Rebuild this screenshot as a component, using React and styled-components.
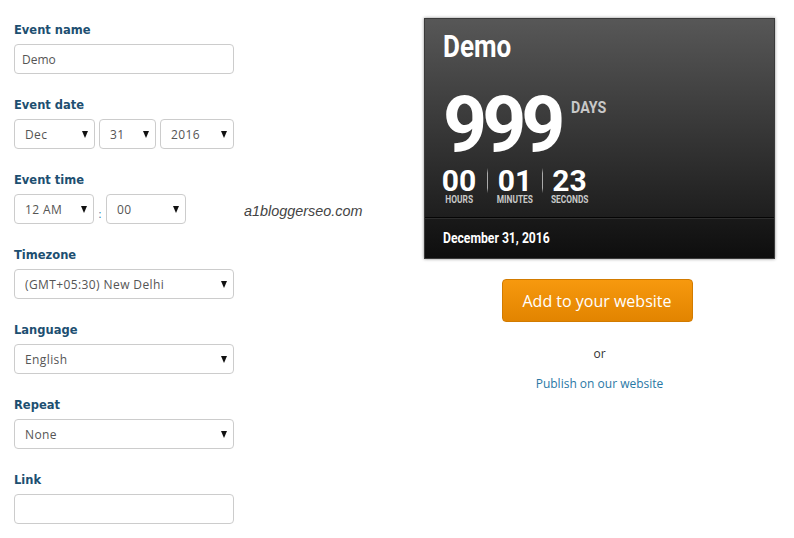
import React from "react";
import styled, { createGlobalStyle } from "styled-components";

const Global = createGlobalStyle`
  html, body { margin: 0; padding: 0; background: #fff; }
  body { font-family: "Open Sans", "Liberation Sans", sans-serif; }
  * { box-sizing: border-box; }
`;

const Page = styled.div`
  position: relative;
  display: flex;
  align-items: flex-start;
  padding: 18px 0 0 14px;
  width: 794px;
  height: 538px;
`;

const Form = styled.div`
  width: 220px;
  padding-top: 4px;
  display: flex;
  flex-direction: column;
`;

const Group = styled.div`
  margin-bottom: 23px;
`;

const Label = styled.label`
  display: block;
  font-family: "DejaVu Sans", Verdana, sans-serif;
  font-weight: bold;
  font-size: 11.5px;
  line-height: 16px;
  color: #1d4f71;
  margin-bottom: 6px;
`;

const TextInput = styled.input`
  display: block;
  width: 100%;
  height: 30px;
  border: 1px solid #ccc;
  border-radius: 4px;
  padding: 0 7px;
  font-family: "Open Sans", sans-serif;
  font-size: 12px;
  color: #555;
  outline: none;
`;

const Row = styled.div`
  display: flex;
  align-items: center;
  gap: ${(p) => p.$gap}px;
`;

const SelectWrap = styled.div`
  position: relative;
  width: ${(p) => (p.$w ? `${p.$w}px` : "100%")};
  height: 30px;
  flex: none;
`;

const Select = styled.select`
  appearance: none;
  -webkit-appearance: none;
  width: 100%;
  height: 30px;
  border: 1px solid #ccc;
  border-radius: 4px;
  background: #fff;
  padding: 0 18px 0 10px;
  font-family: "Open Sans", sans-serif;
  font-size: 12px;
  letter-spacing: 0.4px;
  color: #555;
  outline: none;
`;

const Arrow = styled.span`
  position: absolute;
  right: 7px;
  top: 12px;
  width: 0;
  height: 0;
  border-left: 3.5px solid transparent;
  border-right: 3.5px solid transparent;
  border-top: 7px solid #111;
  pointer-events: none;
`;

const Colon = styled.span`
  width: 12px;
  text-align: center;
  font-size: 11px;
  color: #2a7aa8;
  padding-top: 9px;
`;

const Watermark = styled.div`
  position: absolute;
  left: 244px;
  top: 203px;
  font-family: "Liberation Sans", Arial, sans-serif;
  font-style: italic;
  font-size: 14.4px;
  color: #444;
`;

const Side = styled.div`
  margin-left: 190px;
  width: 351px;
  display: flex;
  flex-direction: column;
  align-items: center;
`;

const Card = styled.div`
  width: 351px;
  font-family: "Roboto", "Liberation Sans", sans-serif;
  font-weight: bold;
  color: #fff;
  box-shadow: 0 0 3px rgba(0, 0, 0, 0.45);
  border: 1px solid #3a3a3a;
`;

const CardTop = styled.div`
  height: 199px;
  padding: 12px 0 0 18px;
  background: linear-gradient(#575757, #1e1e1e);
  border-bottom: 1px solid #050505;
`;

/* condensed face substitute: narrows the glyphs horizontally */
const Squeeze = styled.span`
  display: inline-block;
  white-space: nowrap;
  transform: scaleX(${(p) => p.$s});
  transform-origin: ${(p) => p.$o || "left"} center;
`;

const Title = styled.div`
  font-size: 31px;
  line-height: 31px;
`;

const DaysRow = styled.div`
  display: flex;
  align-items: flex-start;
  margin-top: 25px;
  height: 77px;
`;

const Big = styled.div`
  font-size: 77px;
  line-height: 77px;
  letter-spacing: -5px;
`;

const DaysLabel = styled.div`
  font-size: 17px;
  line-height: 17px;
  color: #c8c8c8;
  margin: 12px 0 0 10px;
`;

const Units = styled.div`
  display: flex;
  margin-top: 2.5px;
`;

const Unit = styled.div`
  box-sizing: content-box;
  width: ${(p) => p.$w}px;
  display: flex;
  flex-direction: column;
  align-items: center;
  padding: 0 ${(p) => p.$pr}px 0 ${(p) => p.$pl}px;
  border-style: solid;
  border-width: 0 0 0 ${(p) => (p.$sep ? 1 : 0)}px;
  border-image: linear-gradient(transparent 5%, #aaa 18%, #aaa 55%, transparent 68%) 1;
  height: 38px;
`;

const UnitNum = styled.div`
  font-size: 30px;
  line-height: 27px;
`;

const UnitLabel = styled.div`
  font-size: 11px;
  line-height: 9px;
  margin-top: 1px;
  color: #c8c8c8;
`;

const CardBottom = styled.div`
  height: 40px;
  border-top: 1px solid #2e2e2e;
  background: linear-gradient(#191919, #0e0e0e);
  padding: 12px 0 0 18px;
  font-size: 14px;
  line-height: 14px;
`;

const Button = styled.button`
  margin-top: 20px;
  margin-right: 5px;
  width: 191px;
  height: 43px;
  border: 1px solid #d27b00;
  border-radius: 4px;
  background: linear-gradient(#f7990e, #e28400);
  color: #fff;
  font-family: "Open Sans", sans-serif;
  font-size: 16px;
  cursor: pointer;
`;

const Or = styled.div`
  margin-top: 24px;
  font-size: 12px;
  line-height: 16px;
  color: #333;
`;

const Link = styled.a`
  margin-top: 14px;
  font-size: 12px;
  line-height: 16px;
  color: #2a78a5;
  text-decoration: none;
`;

const Sel = ({ w, value }) => (
  <SelectWrap $w={w}>
    <Select defaultValue={value}>
      <option>{value}</option>
    </Select>
    <Arrow />
  </SelectWrap>
);

const units = [
  { n: "00", l: "HOURS", w: 32, pl: 0, pr: 12, sep: false },
  { n: "01", l: "MINUTES", w: 36, pl: 9, pr: 9, sep: true },
  { n: "23", l: "SECONDS", w: 37, pl: 8, pr: 0, sep: true },
];

export default function App() {
  return (
    <>
      <Global />
      <Page>
        <Form>
          <Group>
            <Label>Event name</Label>
            <TextInput defaultValue="Demo" />
          </Group>
          <Group>
            <Label>Event date</Label>
            <Row $gap={4}>
              <Sel w={81} value="Dec" />
              <Sel w={57} value="31" />
              <Sel w={74} value="2016" />
            </Row>
          </Group>
          <Group>
            <Label>Event time</Label>
            <Row $gap={0}>
              <Sel w={80} value="12 AM" />
              <Colon>:</Colon>
              <Sel w={80} value="00" />
            </Row>
          </Group>
          <Group>
            <Label>Timezone</Label>
            <Sel value="(GMT+05:30) New Delhi" />
          </Group>
          <Group>
            <Label>Language</Label>
            <Sel value="English" />
          </Group>
          <Group>
            <Label>Repeat</Label>
            <Sel value="None" />
          </Group>
          <Group>
            <Label>Link</Label>
            <TextInput />
          </Group>
        </Form>
        <Watermark>a1bloggerseo.com</Watermark>
        <Side>
          <Card>
            <CardTop>
              <Title>
                <Squeeze $s={0.84}>Demo</Squeeze>
              </Title>
              <DaysRow>
                <Big>999</Big>
                <DaysLabel>
                  <Squeeze $s={0.84}>DAYS</Squeeze>
                </DaysLabel>
              </DaysRow>
              <Units>
                {units.map((u) => (
                  <Unit key={u.l} $w={u.w} $pl={u.pl} $pr={u.pr} $sep={u.sep}>
                    <UnitNum>{u.n}</UnitNum>
                    <UnitLabel>
                      <Squeeze $s={0.76} $o="center">
                        {u.l}
                      </Squeeze>
                    </UnitLabel>
                  </Unit>
                ))}
              </Units>
            </CardTop>
            <CardBottom>
              <Squeeze $s={0.87}>December 31, 2016</Squeeze>
            </CardBottom>
          </Card>
          <Button>Add to your website</Button>
          <Or>or</Or>
          <Link href="#">Publish on our website</Link>
        </Side>
      </Page>
    </>
  );
}
